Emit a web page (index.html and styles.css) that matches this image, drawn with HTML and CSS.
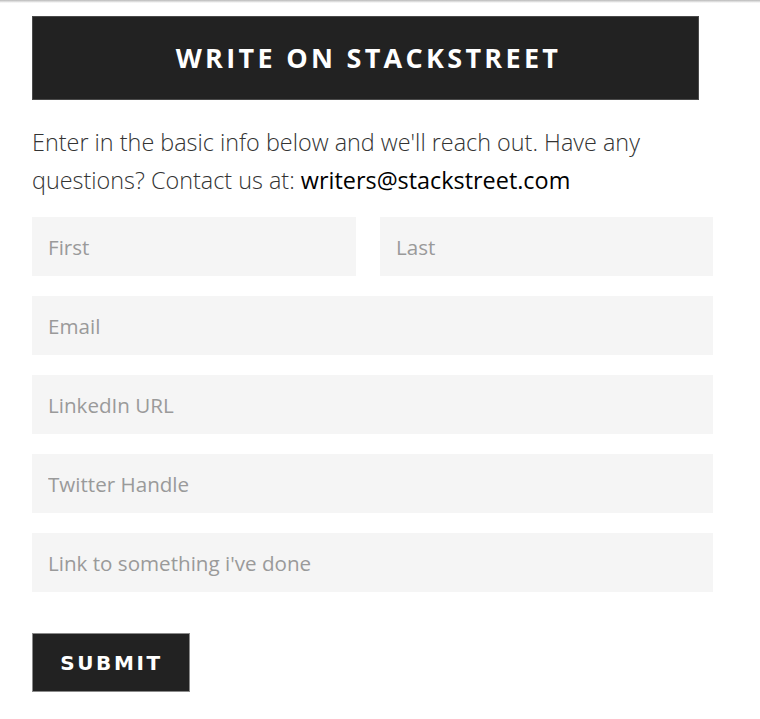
FILE: index.html
```html
<!DOCTYPE html>
<html>
<head>
<meta charset="utf-8">
<link rel="stylesheet" href="styles.css">
</head>
<body>
<div class="topshade"></div>
<main class="page">
  <h1 class="banner">WRITE ON STACKSTREET</h1>
  <p class="intro">Enter in the basic info below and we'll reach out. Have any questions? Contact us at: <a class="mail" href="#">writers@stackstreet.com</a></p>
  <form class="form">
    <div class="row two">
      <input class="field" type="text" placeholder="First">
      <input class="field" type="text" placeholder="Last">
    </div>
    <input class="field" type="text" placeholder="Email">
    <input class="field" type="text" placeholder="LinkedIn URL">
    <input class="field" type="text" placeholder="Twitter Handle">
    <input class="field" type="text" placeholder="Link to something i've done">
    <button class="submit" type="button">SUBMIT</button>
  </form>
</main>
</body>
</html>
```
FILE: styles.css
```css
html, body {
  margin: 0;
  padding: 0;
  background: #fff;
}
.topshade {
  height: 3px;
  background: linear-gradient(#b9b9b9, #e4e4e4 60%, #fff);
}
.page {
  padding: 13px 0 0 32px;
  width: 681px;
}
.banner {
  margin: 0;
  width: 667px;
  height: 84px;
  box-sizing: border-box;
  background: #222;
  border: 1px solid #4a4a4a;
  color: #fff;
  font-family: "Open Sans", sans-serif;
  font-weight: 700;
  font-size: 27px;
  letter-spacing: 3.3px;
  display: flex;
  align-items: center;
  justify-content: center;
  padding: 0 0 2px 6px;
}
.intro {
  margin: 23px 0 18px 0;
  font-family: "Open Sans", sans-serif;
  font-weight: 300;
  font-size: 23.4px;
  line-height: 38px;
  color: #333;
  width: 660px;
}
.mail {
  color: #000;
  font-weight: 400;
  text-decoration: none;
}
.form {
  display: flex;
  flex-direction: column;
  gap: 20px;
  margin: 0;
}
.row.two {
  display: grid;
  grid-template-columns: 324px 333px;
  column-gap: 24px;
}
.field {
  height: 59px;
  box-sizing: border-box;
  border: none;
  outline: none;
  background: #f5f5f5;
  padding: 0 16px;
  font-family: "Open Sans", sans-serif;
  font-size: 20.6px;
  color: #333;
  width: 100%;
}
.field::placeholder {
  color: #9a9a9a;
}
.submit {
  margin-top: 21px;
  align-self: flex-start;
  width: 158px;
  height: 59px;
  box-sizing: border-box;
  background: #222;
  border: 1px solid #8a8a8a;
  color: #fff;
  font-family: "DejaVu Sans", sans-serif;
  font-weight: 700;
  font-size: 20px;
  letter-spacing: 2.6px;
  padding: 0 0 0 1px;
}
```
